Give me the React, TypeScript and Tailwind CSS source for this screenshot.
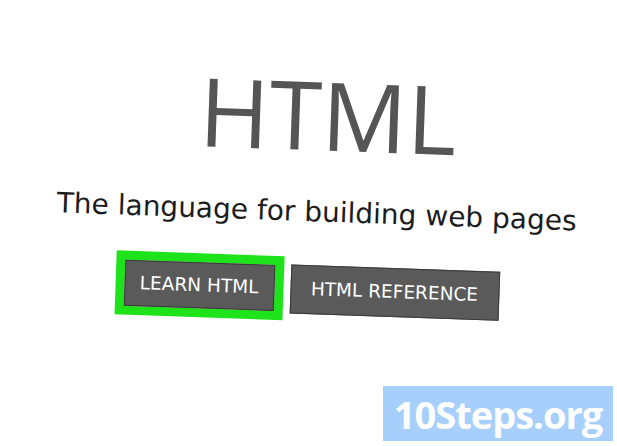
export default function App() {
  return (
    <div className="relative h-[446px] w-[617px] overflow-hidden bg-white">
      {/* tilted page content, the photo is a little rotated */}
      <div className="flex rotate-[2deg] flex-col items-center pl-[12px] pt-[66px]">
        <h1 className="ml-[24px] font-['Open_Sans'] text-[95px] font-normal leading-none text-[#555555]">
          HTML
        </h1>
        <p className="ml-[8px] mt-[37px] font-['DejaVu_Sans'] text-[28px] leading-none text-[#1c1c1c]">
          The language for building web pages
        </p>
        <div className="mr-[6px] mt-[31px] flex items-center gap-[7px]">
          <div className="border-[9px] border-[#1ee31a]">
            <div className="flex h-[46px] w-[150px] items-center justify-center border border-[#3a3a3a] bg-[#5a5a5a] font-['DejaVu_Sans'] text-[18.5px] text-white">
              LEARN HTML
            </div>
          </div>
          <div className="flex h-[49px] w-[209px] items-center justify-center border border-[#3a3a3a] bg-[#5a5a5a] font-['DejaVu_Sans'] text-[18.5px] text-white">
            HTML REFERENCE
          </div>
        </div>
      </div>

      {/* watermark */}
      <div className="absolute bottom-[5px] right-[4px] flex h-[55px] w-[230px] items-center justify-center bg-[#a6d0fb] font-['Open_Sans'] text-[38px] font-bold leading-none tracking-[-1px] text-white">
        10Steps.org
      </div>
    </div>
  );
}
